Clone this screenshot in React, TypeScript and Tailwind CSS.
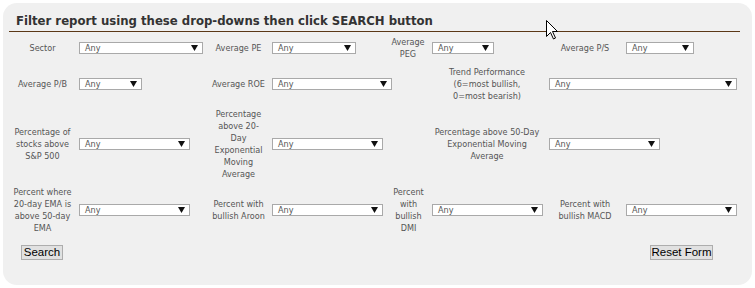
import React from "react";

const font = { fontFamily: '"DejaVu Sans Condensed", "DejaVu Sans", Tahoma, sans-serif' };

function Label({ className, lines }: { className: string; lines: string[] }) {
  return (
    <div className={`flex-none text-center whitespace-nowrap text-[9px] leading-[12px] text-[#555] ${className}`}>
      {lines.map((l, i) => (
        <div key={i}>{l}</div>
      ))}
    </div>
  );
}

function Select({ className }: { className: string }) {
  return (
    <div
      className={`flex-none flex h-[12px] items-center justify-between border border-[#a9a9a9] bg-white pl-[5px] pr-[4px] text-[9px] leading-none text-[#555] ${className}`}
    >
      <span>Any</span>
      <svg width="7" height="6" viewBox="0 0 7 6">
        <path d="M0 0H7L3.5 6Z" fill="#111" />
      </svg>
    </div>
  );
}

function Button({ children, className }: { children: React.ReactNode; className: string }) {
  return (
    <div
      className={`flex h-[15px] items-center justify-center border border-[#adadad] bg-[#e1e1e1] text-[11.5px] leading-none text-black ${className}`}
      style={{ fontFamily: '"Liberation Sans", Arial, sans-serif' }}
    >
      {children}
    </div>
  );
}

export default function App() {
  return (
    <div className="relative h-[288px] w-[755px] bg-white pl-[3px] pt-[3px]" style={font}>
      <div className="flex h-[282px] w-[749px] flex-col rounded-[14px] bg-[#f0f0f0]">
        <div className="pl-[13px] pt-[9px] text-[13px] font-bold leading-[17px] text-[#333]">
          Filter report using these drop-downs then click SEARCH button
        </div>
        <div className="ml-[6px] mt-[2px] h-px w-[731px] bg-[#5b3816]" />

        <div className="mt-[4px] flex flex-col gap-[6px] pl-[6px]">
          <div className="flex items-center">
            <Label className="w-[67px]" lines={["Sector"]} />
            <Select className="ml-[3px] w-[124px]" />
            <Label className="ml-[4px] w-[63px]" lines={["Average PE"]} />
            <Select className="ml-[2px] w-[84px]" />
            <Label className="ml-[28px] w-[48px]" lines={["Average", "PEG"]} />
            <Select className="w-[62px]" />
            <Label className="ml-[50px] w-[82px]" lines={["Average P/S"]} />
            <Select className="w-[68px]" />
          </div>

          <div className="flex items-center">
            <Label className="w-[67px]" lines={["Average P/B"]} />
            <Select className="ml-[3px] w-[63px]" />
            <Label className="ml-[65px] w-[63px]" lines={["Average ROE"]} />
            <Select className="ml-[2px] w-[120px]" />
            <Label
              className="ml-[33px] w-[124px]"
              lines={["Trend Performance", "(6=most bullish,", "0=most bearish)"]}
            />
            <Select className="w-[188px]" />
          </div>

          <div className="flex items-center">
            <Label className="w-[67px]" lines={["Percentage of", "stocks above", "S&P 500"]} />
            <Select className="ml-[3px] w-[111px]" />
            <Label
              className="ml-[17px] w-[63px]"
              lines={["Percentage", "above 20-", "Day", "Exponential", "Moving", "Average"]}
            />
            <Select className="ml-[2px] w-[111px]" />
            <Label
              className="ml-[42px] w-[124px]"
              lines={["Percentage above 50-Day", "Exponential Moving", "Average"]}
            />
            <Select className="w-[111px]" />
          </div>

          <div className="flex items-center">
            <Label
              className="w-[67px]"
              lines={["Percent where", "20-day EMA is", "above 50-day", "EMA"]}
            />
            <Select className="ml-[3px] w-[111px]" />
            <Label className="ml-[17px] w-[63px]" lines={["Percent with", "bullish Aroon"]} />
            <Select className="ml-[2px] w-[111px]" />
            <Label className="ml-[2px] w-[47px]" lines={["Percent", "with", "bullish", "DMI"]} />
            <Select className="w-[111px]" />
            <Label className="ml-[1px] w-[82px]" lines={["Percent with", "bullish MACD"]} />
            <Select className="w-[111px]" />
          </div>
        </div>

        <div className="mt-[11px] flex items-center pl-[18px]">
          <Button className="w-[42px]">Search</Button>
          <Button className="ml-[587px] w-[63px]">Reset Form</Button>
        </div>
      </div>

      <svg className="absolute left-[546px] top-[20px]" width="13" height="20" viewBox="0 0 13 20">
        <path
          d="M0.5 0.5V16.5L4.5 12.5L7.5 19L9.5 18L6.5 11.5H11.5Z"
          fill="#fff"
          stroke="#000"
          strokeWidth="1"
          strokeLinejoin="miter"
        />
      </svg>
    </div>
  );
}
